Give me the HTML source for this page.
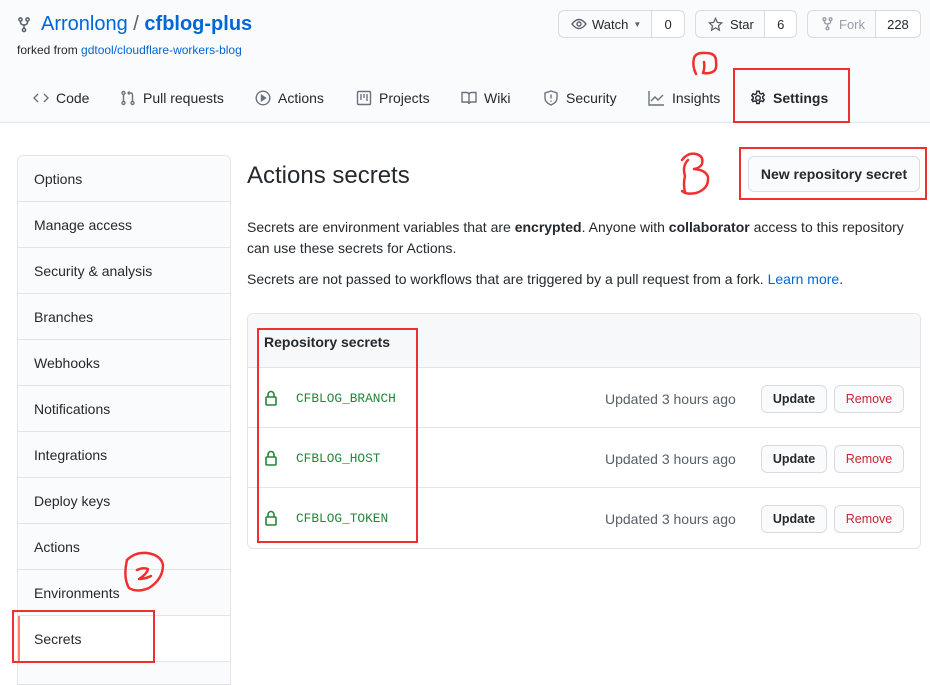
<!DOCTYPE html>
<html><head><meta charset="utf-8"><style>
*{box-sizing:border-box;margin:0;padding:0}
body{width:930px;height:678px;overflow:hidden;background:#fff;font-family:"Liberation Sans",sans-serif;color:#24292e;position:relative;font-size:14px}
.hdr{position:absolute;left:0;top:0;width:930px;height:123px;background:#fafbfc;border-bottom:1px solid #e1e4e8}
.abs{position:absolute;white-space:nowrap}
a{color:#0366d6;text-decoration:none}
.btn{position:absolute;height:28px;border:1px solid #d8dbe0;border-radius:6px;background:#fafbfc;font-size:13px;display:flex;align-items:center}
.btn .c{border-left:1px solid #d8dbe0;height:100%;display:flex;align-items:center;justify-content:center;background:#fff;border-radius:0 6px 6px 0}
.tab{position:absolute;top:90px;font-size:14px;display:flex;align-items:center;gap:7px;color:#24292e}
.tab svg{stroke:#6a737d;fill:none;stroke-width:1.4}
.side{position:absolute;left:17px;top:155px;width:214px;height:530px;border:1px solid #e1e4e8;border-radius:6px 6px 0 0;overflow:hidden}
.side div{height:46px;border-bottom:1px solid #e1e4e8;padding-left:16px;line-height:46px;font-size:14px;background:#fafbfc}
.side div.sel{background:#fff;border-left:2px solid #f9826c;padding-left:14px}
.box{position:absolute;left:247px;top:313px;width:674px;height:236px;border:1px solid #e1e4e8;border-radius:6px;overflow:hidden}
.row{position:absolute;left:0;width:672px;height:60px;border-top:1px solid #e1e4e8}
.mono{font-family:"Liberation Mono",monospace;font-size:12.8px;color:#22863a}
.sb{position:absolute;height:28px;border:1px solid #d8dbe0;border-radius:6px;background:#fafbfc;font-size:12.5px;text-align:center;line-height:26px}
.red{position:absolute;border:2px solid #f03030}
</style></head><body>
<div class="hdr"></div>
<svg class="abs" style="left:18px;top:17px" width="12" height="16" viewBox="0 0 12 16"><g fill="none" stroke="#586069" stroke-width="1.5"><circle cx="2.5" cy="2.5" r="1.6"/><circle cx="9.5" cy="2.5" r="1.6"/><circle cx="6" cy="13" r="1.6"/><path d="M2.5 4v1.5q0 2 3.5 2.5q3.5-.5 3.5-2.5V4M6 8v3.5"/></g></svg>
<div class="abs" style="left:41px;top:13px;font-size:20px;color:#0366d6">Arronlong <span style="color:#586069">/</span> <b>cfblog-plus</b></div>
<div class="abs" style="left:17px;top:43px;font-size:12px;color:#24292e">forked from <a>gdtool/cloudflare-workers-blog</a></div>

<div class="btn" style="left:558px;top:10px;width:127px"><span style="display:flex;align-items:center;gap:5px;padding-left:12px;width:93px"><svg width="16" height="12" viewBox="0 0 16 12"><path d="M1 6q7-9 14 0q-7 9-14 0z" fill="none" stroke="#586069" stroke-width="1.4"/><circle cx="8" cy="6" r="2" fill="none" stroke="#586069" stroke-width="1.4"/></svg>Watch <span style="font-size:8px;color:#586069">▼</span></span><span class="c" style="width:33px">0</span></div>
<div class="btn" style="left:695px;top:10px;width:102px"><span style="display:flex;align-items:center;gap:7px;padding-left:12px;width:69px"><svg width="15" height="15" viewBox="0 0 16 16"><path d="M8 1.5l2 4.3 4.6.5-3.4 3.1 1 4.6L8 11.6 3.8 14l1-4.6L1.4 6.3 6 5.8z" fill="none" stroke="#586069" stroke-width="1.3"/></svg>Star</span><span class="c" style="width:32px">6</span></div>
<div class="btn" style="left:807px;top:10px;width:114px;color:#959da5"><span style="display:flex;align-items:center;gap:6px;padding-left:14px;width:68px"><svg width="11" height="14" viewBox="0 0 12 16"><g fill="none" stroke="#959da5" stroke-width="1.5"><circle cx="2.5" cy="2.5" r="1.6"/><circle cx="9.5" cy="2.5" r="1.6"/><circle cx="6" cy="13" r="1.6"/><path d="M2.5 4v1.5q0 2 3.5 2.5q3.5-.5 3.5-2.5V4M6 8v3.5"/></g></svg>Fork</span><span class="c" style="width:46px;color:#24292e">228</span></div>

<div class="tab" style="left:33px"><svg width="16" height="16" viewBox="0 0 16 16"><path d="M5 4L1 8l4 4M11 4l4 4-4 4"/></svg>Code</div>
<div class="tab" style="left:120px"><svg width="16" height="16" viewBox="0 0 16 16"><circle cx="3.5" cy="3" r="1.5"/><circle cx="3.5" cy="13" r="1.5"/><circle cx="12.5" cy="13" r="1.5"/><path d="M3.5 4.5v7M12.5 11.5V5q0-2-2-2H8M9.5 1.5L8 3l1.5 1.5"/></svg>Pull requests</div>
<div class="tab" style="left:255px"><svg width="16" height="16" viewBox="0 0 16 16"><circle cx="8" cy="8" r="6.8"/><path d="M6.5 5.3v5.4L10.5 8z" fill="#6a737d"/></svg>Actions</div>
<div class="tab" style="left:356px"><svg width="16" height="16" viewBox="0 0 16 16"><rect x="1.5" y="1.5" width="13" height="13" rx="1"/><path d="M5 4v6M8 4v4M11 4v7"/></svg>Projects</div>
<div class="tab" style="left:461px"><svg width="16" height="16" viewBox="0 0 16 16"><path d="M1 2.5h4.5Q8 2.5 8 5v9q0-2-2.5-2H1zM15 2.5h-4.5Q8 2.5 8 5v9q0-2 2.5-2H15z"/></svg>Wiki</div>
<div class="tab" style="left:543px"><svg width="16" height="16" viewBox="0 0 16 16"><path d="M8 1l6 2v5q0 4.5-6 7q-6-2.5-6-7V3z"/><path d="M8 4.5v4M8 10.5v1.2"/></svg>Security</div>
<div class="tab" style="left:648px"><svg width="17" height="16" viewBox="0 0 17 16"><path d="M1 1v14h15M3 11l4-4 3 3 5-5"/></svg>Insights</div>
<div class="tab" style="left:750px;font-weight:bold"><svg width="16" height="16" viewBox="0 0 16 16" style="stroke:#24292e"><circle cx="8" cy="8" r="2.3"/><path d="M6.8 1.2h2.4l.4 2 1.5.8 1.9-.8 1.2 2-1.5 1.4v1.6l1.5 1.4-1.2 2-1.9-.8-1.5.8-.4 2H6.8l-.4-2-1.5-.8-1.9.8-1.2-2L3.3 8.8V7.2L1.8 5.8l1.2-2 1.9.8 1.5-.8z"/></svg>Settings</div>

<div class="side">
<div>Options</div><div>Manage access</div><div>Security &amp; analysis</div><div>Branches</div><div>Webhooks</div><div>Notifications</div><div>Integrations</div><div>Deploy keys</div><div>Actions</div><div>Environments</div><div class="sel">Secrets</div><div></div>
</div>

<div class="abs" style="left:247px;top:162px;font-size:24px">Actions secrets</div>
<div class="sb" style="left:748px;top:156px;width:172px;height:36px;line-height:34px;font-size:14px;font-weight:bold">New repository secret</div>
<div class="abs" style="left:247px;top:217px;font-size:14px;line-height:21px;white-space:normal;width:680px">Secrets are environment variables that are <b>encrypted</b>. Anyone with <b>collaborator</b> access to this repository can use these secrets for Actions.</div>
<div class="abs" style="left:247px;top:271px">Secrets are not passed to workflows that are triggered by a pull request from a fork. <a>Learn more</a>.</div>

<div class="box">
<div style="position:absolute;left:0;top:0;width:672px;height:54px;background:#f6f8fa"></div>
<div class="abs" style="left:16px;top:20px;font-weight:bold;font-size:14px">Repository secrets</div>
<div class="row" style="top:53px"></div><div class="row" style="top:113px"></div><div class="row" style="top:173px"></div>
</div>

<div class="abs" style="left:265px;top:390px"><svg width="12" height="16" viewBox="0 0 12 16"><g fill="none" stroke="#22863a" stroke-width="1.6"><rect x="1" y="7" width="10" height="8" rx="1"/><path d="M3 7V4.5a3 3 0 0 1 6 0V7"/></g></svg></div>
<div class="abs mono" style="left:296px;top:391px">CFBLOG_BRANCH</div>
<div class="abs" style="left:605px;top:391px;color:#586069">Updated 3 hours ago</div>
<div class="sb" style="left:761px;top:385px;width:66px;font-weight:bold">Update</div>
<div class="sb" style="left:834px;top:385px;width:70px;color:#cb2431">Remove</div>

<div class="abs" style="left:265px;top:450px"><svg width="12" height="16" viewBox="0 0 12 16"><g fill="none" stroke="#22863a" stroke-width="1.6"><rect x="1" y="7" width="10" height="8" rx="1"/><path d="M3 7V4.5a3 3 0 0 1 6 0V7"/></g></svg></div>
<div class="abs mono" style="left:296px;top:451px">CFBLOG_HOST</div>
<div class="abs" style="left:605px;top:451px;color:#586069">Updated 3 hours ago</div>
<div class="sb" style="left:761px;top:445px;width:66px;font-weight:bold">Update</div>
<div class="sb" style="left:834px;top:445px;width:70px;color:#cb2431">Remove</div>

<div class="abs" style="left:265px;top:510px"><svg width="12" height="16" viewBox="0 0 12 16"><g fill="none" stroke="#22863a" stroke-width="1.6"><rect x="1" y="7" width="10" height="8" rx="1"/><path d="M3 7V4.5a3 3 0 0 1 6 0V7"/></g></svg></div>
<div class="abs mono" style="left:296px;top:511px">CFBLOG_TOKEN</div>
<div class="abs" style="left:605px;top:511px;color:#586069">Updated 3 hours ago</div>
<div class="sb" style="left:761px;top:505px;width:66px;font-weight:bold">Update</div>
<div class="sb" style="left:834px;top:505px;width:70px;color:#cb2431">Remove</div>

<div class="red" style="left:733px;top:68px;width:117px;height:55px"></div>
<div class="red" style="left:739px;top:147px;width:188px;height:53px"></div>
<div class="red" style="left:257px;top:328px;width:161px;height:215px"></div>
<div class="red" style="left:12px;top:610px;width:143px;height:53px"></div>
<svg class="abs" style="left:0;top:0" width="930" height="678"><g fill="none" stroke="#f03030" stroke-width="2.5" stroke-linecap="round" stroke-linejoin="round">
<path d="M696 74q-4-8-2-16q2-6 12-5q10 0 10 8q1 8-2 10q-4 3-10 2M704 62q1 6-1 11"/>
<path d="M682 160q6-8 14-6q8 2 6 10q-2 4-8 5q12 1 14 8q1 12-12 16q-10 2-14-2M688 160q-6 6-3 16q-2 8 0 16"/>
<path d="M127 560q8-8 20-7q14 2 16 12q0 14-14 23q-12 5-20 0q-6-10-2-28M137 570q6-3 11-1q-1 5-9 10q6 0 12-3"/>
</g></svg>
</body></html>
